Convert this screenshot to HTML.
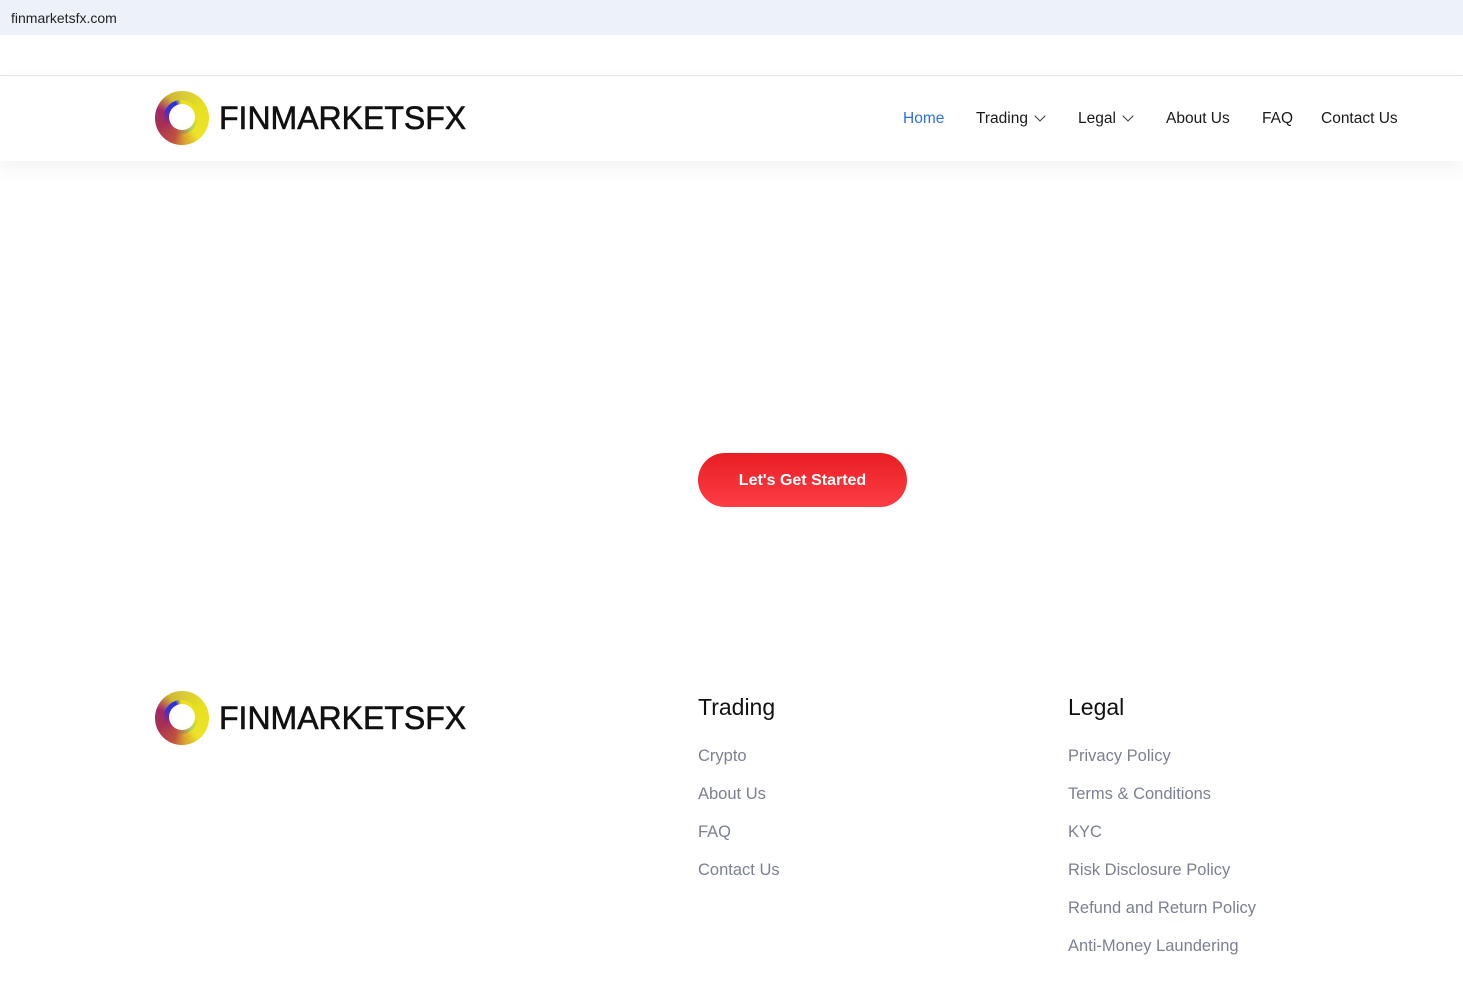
<!DOCTYPE html>
<html><head><meta charset="utf-8"><style>
*{margin:0;padding:0;box-sizing:border-box}
body{width:1463px;height:983px;overflow:hidden;background:#fff;font-family:"Liberation Sans",sans-serif;position:relative}
.bar{position:absolute;left:0;top:0;width:1463px;height:35px;background:#edf1f9;font-size:14px;color:#222;padding:10px 0 0 11px}
.hdr{position:absolute;left:0;top:75px;width:1463px;height:86px;border-top:1px solid #e5e5e5;box-shadow:0 8px 20px rgba(0,0,0,.05);background:#fff}
.logo{position:absolute;display:flex;align-items:center}
.ring{width:54px;height:54px;border-radius:50%;background:conic-gradient(#d8c838 0deg,#e8e020 60deg,#ece428 140deg,#d8a030 175deg,#c05040 200deg,#a83050 250deg,#a02868 290deg,#d0b830 330deg,#d8c838 360deg);position:relative}
.ring:before{content:"";position:absolute;left:9px;top:9px;width:34px;height:34px;border-radius:50%;background:conic-gradient(#e8e020 0deg,#e8e020 100deg,#a8d060 140deg,#c05040 200deg,#a02868 250deg,#3030e0 300deg,#3030e0 340deg,#e8e020 360deg)}
.ring:after{content:"";position:absolute;left:14px;top:13px;width:26px;height:26px;border-radius:50%;background:#fff}
.lt{font-size:32px;font-weight:500;color:#111;margin-left:10px;-webkit-text-stroke:.6px #111}
.nav{position:absolute;top:110px;font-size:15.5px;color:#1a1a1a}
.nav span{position:absolute;white-space:nowrap}
.chev{display:inline-block;width:8px;height:8px;border-right:1.5px solid #333;border-bottom:1.5px solid #333;transform:rotate(45deg);margin-left:8px;position:relative;top:-3px}
.btn{position:absolute;left:698px;top:453px;width:209px;height:54px;border-radius:27px;background:linear-gradient(#e81e24,#fd3d44);color:#fff;font-weight:bold;font-size:16px;text-align:center;line-height:56px}
.h{position:absolute;font-size:23px;color:#111;top:694px}
.l{position:absolute;font-size:16.5px;color:#7c8092}
</style></head><body>
<div class="bar">finmarketsfx.com</div>
<div class="hdr"></div>
<div class="logo" style="left:155px;top:91px"><div class="ring"></div><div class="lt">FINMARKETSFX</div></div>
<div class="nav">
<span style="left:903px;color:#2f6fe8">Home</span>
<span style="left:976px">Trading<i class="chev"></i></span>
<span style="left:1078px">Legal<i class="chev"></i></span>
<span style="left:1166px">About Us</span>
<span style="left:1262px">FAQ</span>
<span style="left:1321px">Contact Us</span>
</div>
<div class="btn">Let's Get Started</div>
<div class="logo" style="left:155px;top:691px"><div class="ring"></div><div class="lt">FINMARKETSFX</div></div>
<div class="h" style="left:698px">Trading</div>
<div class="h" style="left:1068px">Legal</div>
<div class="l" style="left:698px;top:747px">Crypto</div>
<div class="l" style="left:698px;top:785px">About Us</div>
<div class="l" style="left:698px;top:823px">FAQ</div>
<div class="l" style="left:698px;top:861px">Contact Us</div>
<div class="l" style="left:1068px;top:747px">Privacy Policy</div>
<div class="l" style="left:1068px;top:785px">Terms &amp; Conditions</div>
<div class="l" style="left:1068px;top:823px">KYC</div>
<div class="l" style="left:1068px;top:861px">Risk Disclosure Policy</div>
<div class="l" style="left:1068px;top:899px">Refund and Return Policy</div>
<div class="l" style="left:1068px;top:937px">Anti-Money Laundering</div>
</body></html>
